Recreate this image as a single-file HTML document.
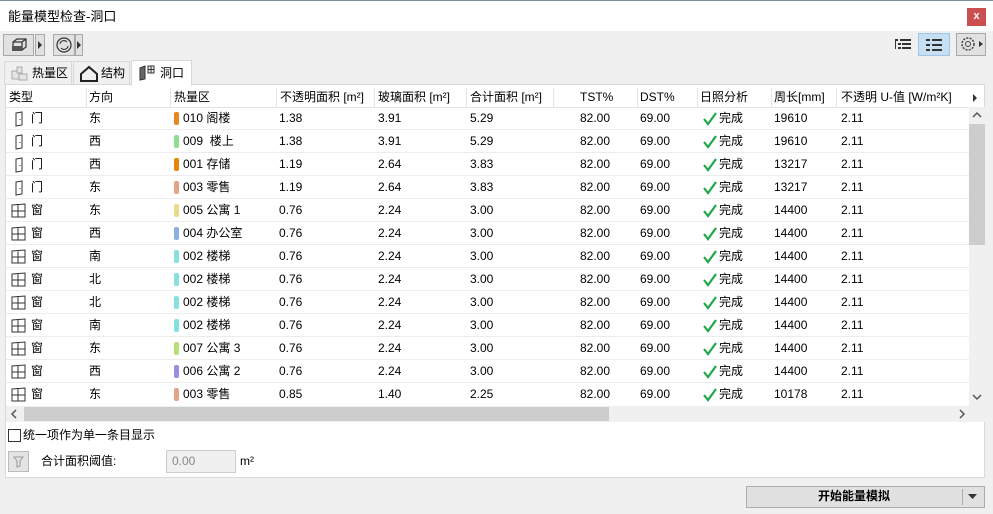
<!DOCTYPE html>
<html><head><meta charset="utf-8"><style>
*{box-sizing:border-box;margin:0;padding:0}
body{width:993px;height:514px;background:#f0f0f0;font-family:"Liberation Sans","Noto Sans CJK SC",sans-serif;font-size:12px;line-height:15px;color:#000;position:relative;overflow:hidden}
.abs{position:absolute}
.title{left:0;top:0;width:993px;height:31px;background:#fff;border-top:1px solid #7f8fa0}
.title span{position:absolute;left:8px;top:8px;font-size:13px}
.close{right:7px;top:7px;width:19px;height:18px;background:#c9504f;color:#fff;font-size:11px;text-align:center;line-height:17px;font-weight:bold}
.tb{border:1px solid #a8a8a8;background:#e1e1e1}
.tab{top:61px;height:24px;border:1px solid #d8d8d8;border-bottom:none;background:#f0f0f0;font-size:12px}
.tab span{top:4px}
.panel{left:5px;top:84px;width:980px;height:394px;background:#fff;border:1px solid #dadada}
.row{position:absolute;left:6px;width:963px;height:23px;border-bottom:1px solid #ececec}
.c{position:absolute;top:4px;white-space:nowrap;line-height:15px}
.hd{position:absolute;white-space:nowrap;line-height:15px}
.vl{position:absolute;top:88px;width:1px;height:19px;background:#e4e4e4}
.zc{position:absolute;top:5px;width:5px;height:13px;border-radius:2px}
.chk{position:absolute;left:697px;top:5px}
</style></head><body>
<div class="abs title"><span>能量模型检查-洞口</span><div class="abs close">x</div></div>

<div class="abs tb" style="left:3px;top:34px;width:31px;height:22px"><svg width="29" height="20"><g fill="none" stroke="#333" stroke-width="1.2"><rect x="9" y="7" width="9" height="8"/><path d="M9 7l4-3h9v8l-4 3M18 7l4-3"/></g><rect x="8" y="11" width="10" height="5" fill="#555"/></svg></div>
<div class="abs tb" style="left:35px;top:34px;width:10px;height:22px"><svg width="8" height="20"><path d="M2 6l4 4-4 4z" fill="#333"/></svg></div>
<div class="abs tb" style="left:53px;top:34px;width:22px;height:22px"><svg width="20" height="20"><circle cx="10" cy="10" r="7" fill="none" stroke="#333" stroke-width="1.2"/><path d="M6 9a4 4 0 0 1 7-2M14 11a4 4 0 0 1-7 2" fill="none" stroke="#333"/></svg></div>
<div class="abs tb" style="left:75px;top:34px;width:8px;height:22px"><svg width="6" height="20"><path d="M1 6l4 4-4 4z" fill="#333"/></svg></div>

<svg class="abs" style="left:894px;top:37px" width="18" height="16"><g fill="#333"><rect x="1" y="2" width="3" height="2"/><rect x="6" y="2" width="11" height="2"/><rect x="4" y="6" width="3" height="2"/><rect x="8" y="6" width="9" height="2"/><rect x="4" y="10" width="3" height="2"/><rect x="8" y="10" width="9" height="2"/><rect x="1" y="4" width="1" height="8"/></g></svg>
<div class="abs" style="left:918px;top:33px;width:32px;height:23px;background:#c6dff3;border:1px solid #9fc5e8"><svg width="30" height="21"><g fill="#333"><rect x="7" y="5" width="4" height="2"/><rect x="13" y="5" width="10" height="2"/><rect x="7" y="10" width="4" height="2"/><rect x="13" y="10" width="10" height="2"/><rect x="7" y="15" width="4" height="2"/><rect x="13" y="15" width="10" height="2"/></g></svg></div>
<div class="abs tb" style="left:956px;top:33px;width:30px;height:23px"><svg width="28" height="21"><circle cx="11" cy="10" r="6" fill="none" stroke="#444" stroke-width="1.5" stroke-dasharray="2 1.3"/><circle cx="11" cy="10" r="2.5" fill="none" stroke="#444"/><path d="M22 7l4 3-4 3z" fill="#333"/></svg></div>

<div class="abs tab" style="left:4px;width:68px"><svg style="position:absolute;left:6px;top:3px" width="18" height="17"><g fill="#e4e4e4" stroke="#aaa"><rect x="1" y="6" width="7" height="8"/><rect x="6" y="2" width="5" height="6"/><rect x="8" y="9" width="8" height="6"/></g></svg><span style="position:absolute;left:27px">热量区</span></div>
<div class="abs tab" style="left:73px;width:57px"><svg style="position:absolute;left:6px;top:3px" width="18" height="17"><path d="M1 9L9 2l8 7v7H1z" fill="none" stroke="#222" stroke-width="2"/></svg><span style="position:absolute;left:27px">结构</span></div>
<div class="abs" style="left:131px;top:60px;width:61px;height:26px;background:#fff;border:1px solid #d8d8d8;border-bottom:none;z-index:2"><svg style="position:absolute;left:6px;top:4px" width="18" height="16"><path d="M2 3l5-2v13l-5 1z" fill="#666" stroke="#333"/><rect x="10" y="1" width="6" height="7" fill="#eee" stroke="#333"/><path d="M13 1v7M10 4.5h6" stroke="#333"/></svg><span style="position:absolute;left:28px;top:5px">洞口</span></div>

<div class="abs panel"></div>
<div class="abs" style="left:6px;top:85px;width:978px;height:22px;background:#fff"></div>
<span class="hd" style="left:9px;top:90px">类型</span>
<span class="hd" style="left:89px;top:90px">方向</span>
<span class="hd" style="left:174px;top:90px">热量区</span>
<span class="hd" style="left:280px;top:90px">不透明面积 [m²]</span>
<span class="hd" style="left:378px;top:90px">玻璃面积 [m²]</span>
<span class="hd" style="left:470px;top:90px">合计面积 [m²]</span>
<span class="hd" style="left:580px;top:90px">TST%</span>
<span class="hd" style="left:640px;top:90px">DST%</span>
<span class="hd" style="left:700px;top:90px">日照分析</span>
<span class="hd" style="left:774px;top:90px">周长[mm]</span>
<span class="hd" style="left:841px;top:90px">不透明 U-值 [W/m²K]</span>
<svg class="abs" style="left:972px;top:93px" width="6" height="10"><path d="M1 1l4 4-4 4z" fill="#333"/></svg>
<div class="vl" style="left:86px"></div><div class="vl" style="left:170px"></div><div class="vl" style="left:276px"></div><div class="vl" style="left:374px"></div><div class="vl" style="left:466px"></div><div class="vl" style="left:553px"></div><div class="vl" style="left:637px"></div><div class="vl" style="left:697px"></div><div class="vl" style="left:771px"></div><div class="vl" style="left:836px"></div>
<div class="abs" style="left:6px;top:107px;width:963px;height:1px;background:#e4e4e4"></div>

<svg width="0" height="0" style="position:absolute"><defs>
<g id="door"><path d="M2 2l6-1v13l-6 1z" fill="none" stroke="#333"/><path d="M6 8v1" stroke="#333"/></g>
<g id="win"><path d="M1 2l13-1v13l-13 0z M1 8h13 M7 1v13" fill="none" stroke="#333"/></g>
<g id="ck"><path d="M1 7l4 5 8-11" fill="none" stroke="#1fa84a" stroke-width="2.2"/></g>
</defs></svg>

<div class="row" style="top:107px"><svg class="abs" style="left:8px;top:4px" width="10" height="16"><use href="#door"/></svg><span class="c" style="left:25px">门</span><span class="c" style="left:83px">东</span><span class="zc" style="left:168px;background:#e8871e"></span><span class="c" style="left:177px">010 阁楼</span><span class="c" style="left:273px">1.38</span><span class="c" style="left:372px">3.91</span><span class="c" style="left:464px">5.29</span><span class="c" style="left:574px">82.00</span><span class="c" style="left:634px">69.00</span><svg class="chk" width="14" height="14"><use href="#ck"/></svg><span class="c" style="left:713px">完成</span><span class="c" style="left:768px">19610</span><span class="c" style="left:835px">2.11</span></div>
<div class="row" style="top:130px"><svg class="abs" style="left:8px;top:4px" width="10" height="16"><use href="#door"/></svg><span class="c" style="left:25px">门</span><span class="c" style="left:83px">西</span><span class="zc" style="left:168px;background:#8ede8e"></span><span class="c" style="left:177px">009 &nbsp;楼上</span><span class="c" style="left:273px">1.38</span><span class="c" style="left:372px">3.91</span><span class="c" style="left:464px">5.29</span><span class="c" style="left:574px">82.00</span><span class="c" style="left:634px">69.00</span><svg class="chk" width="14" height="14"><use href="#ck"/></svg><span class="c" style="left:713px">完成</span><span class="c" style="left:768px">19610</span><span class="c" style="left:835px">2.11</span></div>
<div class="row" style="top:153px"><svg class="abs" style="left:8px;top:4px" width="10" height="16"><use href="#door"/></svg><span class="c" style="left:25px">门</span><span class="c" style="left:83px">西</span><span class="zc" style="left:168px;background:#e8860a"></span><span class="c" style="left:177px">001 存储</span><span class="c" style="left:273px">1.19</span><span class="c" style="left:372px">2.64</span><span class="c" style="left:464px">3.83</span><span class="c" style="left:574px">82.00</span><span class="c" style="left:634px">69.00</span><svg class="chk" width="14" height="14"><use href="#ck"/></svg><span class="c" style="left:713px">完成</span><span class="c" style="left:768px">13217</span><span class="c" style="left:835px">2.11</span></div>
<div class="row" style="top:176px"><svg class="abs" style="left:8px;top:4px" width="10" height="16"><use href="#door"/></svg><span class="c" style="left:25px">门</span><span class="c" style="left:83px">东</span><span class="zc" style="left:168px;background:#e4a487"></span><span class="c" style="left:177px">003 零售</span><span class="c" style="left:273px">1.19</span><span class="c" style="left:372px">2.64</span><span class="c" style="left:464px">3.83</span><span class="c" style="left:574px">82.00</span><span class="c" style="left:634px">69.00</span><svg class="chk" width="14" height="14"><use href="#ck"/></svg><span class="c" style="left:713px">完成</span><span class="c" style="left:768px">13217</span><span class="c" style="left:835px">2.11</span></div>
<div class="row" style="top:199px"><svg class="abs" style="left:5px;top:4px" width="16" height="15"><use href="#win"/></svg><span class="c" style="left:25px">窗</span><span class="c" style="left:83px">东</span><span class="zc" style="left:168px;background:#e8dc8a"></span><span class="c" style="left:177px">005 公寓 1</span><span class="c" style="left:273px">0.76</span><span class="c" style="left:372px">2.24</span><span class="c" style="left:464px">3.00</span><span class="c" style="left:574px">82.00</span><span class="c" style="left:634px">69.00</span><svg class="chk" width="14" height="14"><use href="#ck"/></svg><span class="c" style="left:713px">完成</span><span class="c" style="left:768px">14400</span><span class="c" style="left:835px">2.11</span></div>
<div class="row" style="top:222px"><svg class="abs" style="left:5px;top:4px" width="16" height="15"><use href="#win"/></svg><span class="c" style="left:25px">窗</span><span class="c" style="left:83px">西</span><span class="zc" style="left:168px;background:#8eaee6"></span><span class="c" style="left:177px">004 办公室</span><span class="c" style="left:273px">0.76</span><span class="c" style="left:372px">2.24</span><span class="c" style="left:464px">3.00</span><span class="c" style="left:574px">82.00</span><span class="c" style="left:634px">69.00</span><svg class="chk" width="14" height="14"><use href="#ck"/></svg><span class="c" style="left:713px">完成</span><span class="c" style="left:768px">14400</span><span class="c" style="left:835px">2.11</span></div>
<div class="row" style="top:245px"><svg class="abs" style="left:5px;top:4px" width="16" height="15"><use href="#win"/></svg><span class="c" style="left:25px">窗</span><span class="c" style="left:83px">南</span><span class="zc" style="left:168px;background:#86e0e0"></span><span class="c" style="left:177px">002 楼梯</span><span class="c" style="left:273px">0.76</span><span class="c" style="left:372px">2.24</span><span class="c" style="left:464px">3.00</span><span class="c" style="left:574px">82.00</span><span class="c" style="left:634px">69.00</span><svg class="chk" width="14" height="14"><use href="#ck"/></svg><span class="c" style="left:713px">完成</span><span class="c" style="left:768px">14400</span><span class="c" style="left:835px">2.11</span></div>
<div class="row" style="top:268px"><svg class="abs" style="left:5px;top:4px" width="16" height="15"><use href="#win"/></svg><span class="c" style="left:25px">窗</span><span class="c" style="left:83px">北</span><span class="zc" style="left:168px;background:#86e0e0"></span><span class="c" style="left:177px">002 楼梯</span><span class="c" style="left:273px">0.76</span><span class="c" style="left:372px">2.24</span><span class="c" style="left:464px">3.00</span><span class="c" style="left:574px">82.00</span><span class="c" style="left:634px">69.00</span><svg class="chk" width="14" height="14"><use href="#ck"/></svg><span class="c" style="left:713px">完成</span><span class="c" style="left:768px">14400</span><span class="c" style="left:835px">2.11</span></div>
<div class="row" style="top:291px"><svg class="abs" style="left:5px;top:4px" width="16" height="15"><use href="#win"/></svg><span class="c" style="left:25px">窗</span><span class="c" style="left:83px">北</span><span class="zc" style="left:168px;background:#86e0e0"></span><span class="c" style="left:177px">002 楼梯</span><span class="c" style="left:273px">0.76</span><span class="c" style="left:372px">2.24</span><span class="c" style="left:464px">3.00</span><span class="c" style="left:574px">82.00</span><span class="c" style="left:634px">69.00</span><svg class="chk" width="14" height="14"><use href="#ck"/></svg><span class="c" style="left:713px">完成</span><span class="c" style="left:768px">14400</span><span class="c" style="left:835px">2.11</span></div>
<div class="row" style="top:314px"><svg class="abs" style="left:5px;top:4px" width="16" height="15"><use href="#win"/></svg><span class="c" style="left:25px">窗</span><span class="c" style="left:83px">南</span><span class="zc" style="left:168px;background:#86e0e0"></span><span class="c" style="left:177px">002 楼梯</span><span class="c" style="left:273px">0.76</span><span class="c" style="left:372px">2.24</span><span class="c" style="left:464px">3.00</span><span class="c" style="left:574px">82.00</span><span class="c" style="left:634px">69.00</span><svg class="chk" width="14" height="14"><use href="#ck"/></svg><span class="c" style="left:713px">完成</span><span class="c" style="left:768px">14400</span><span class="c" style="left:835px">2.11</span></div>
<div class="row" style="top:337px"><svg class="abs" style="left:5px;top:4px" width="16" height="15"><use href="#win"/></svg><span class="c" style="left:25px">窗</span><span class="c" style="left:83px">东</span><span class="zc" style="left:168px;background:#b6e07a"></span><span class="c" style="left:177px">007 公寓 3</span><span class="c" style="left:273px">0.76</span><span class="c" style="left:372px">2.24</span><span class="c" style="left:464px">3.00</span><span class="c" style="left:574px">82.00</span><span class="c" style="left:634px">69.00</span><svg class="chk" width="14" height="14"><use href="#ck"/></svg><span class="c" style="left:713px">完成</span><span class="c" style="left:768px">14400</span><span class="c" style="left:835px">2.11</span></div>
<div class="row" style="top:360px"><svg class="abs" style="left:5px;top:4px" width="16" height="15"><use href="#win"/></svg><span class="c" style="left:25px">窗</span><span class="c" style="left:83px">西</span><span class="zc" style="left:168px;background:#9c8ce4"></span><span class="c" style="left:177px">006 公寓 2</span><span class="c" style="left:273px">0.76</span><span class="c" style="left:372px">2.24</span><span class="c" style="left:464px">3.00</span><span class="c" style="left:574px">82.00</span><span class="c" style="left:634px">69.00</span><svg class="chk" width="14" height="14"><use href="#ck"/></svg><span class="c" style="left:713px">完成</span><span class="c" style="left:768px">14400</span><span class="c" style="left:835px">2.11</span></div>
<div class="row" style="top:383px;border-bottom:none"><svg class="abs" style="left:5px;top:4px" width="16" height="15"><use href="#win"/></svg><span class="c" style="left:25px">窗</span><span class="c" style="left:83px">东</span><span class="zc" style="left:168px;background:#e4a487"></span><span class="c" style="left:177px">003 零售</span><span class="c" style="left:273px">0.85</span><span class="c" style="left:372px">1.40</span><span class="c" style="left:464px">2.25</span><span class="c" style="left:574px">82.00</span><span class="c" style="left:634px">69.00</span><svg class="chk" width="14" height="14"><use href="#ck"/></svg><span class="c" style="left:713px">完成</span><span class="c" style="left:768px">10178</span><span class="c" style="left:835px">2.11</span></div>

<div class="abs" style="left:969px;top:107px;width:16px;height:300px;background:#f0f0f0"></div>
<div class="abs" style="left:969px;top:124px;width:16px;height:121px;background:#cdcdcd"></div>
<svg class="abs" style="left:972px;top:111px" width="10" height="8"><path d="M1 6l4-4 4 4" fill="none" stroke="#555" stroke-width="1.5"/></svg>
<svg class="abs" style="left:972px;top:393px" width="10" height="8"><path d="M1 2l4 4 4-4" fill="none" stroke="#555" stroke-width="1.5"/></svg>
<div class="abs" style="left:6px;top:406px;width:963px;height:16px;background:#f0f0f0"></div>
<div class="abs" style="left:24px;top:407px;width:585px;height:14px;background:#cdcdcd"></div>
<svg class="abs" style="left:10px;top:409px" width="8" height="10"><path d="M6 1L2 5l4 4" fill="none" stroke="#555" stroke-width="1.5"/></svg>
<svg class="abs" style="left:958px;top:409px" width="8" height="10"><path d="M2 1l4 4-4 4" fill="none" stroke="#555" stroke-width="1.5"/></svg>
<div class="abs" style="left:969px;top:406px;width:16px;height:16px;background:#f0f0f0"></div>

<div class="abs" style="left:8px;top:429px;width:13px;height:13px;border:1px solid #333;background:#fff"></div>
<span class="abs" style="left:23px;top:428px">统一项作为单一条目显示</span>
<div class="abs" style="left:8px;top:451px;width:21px;height:21px;border:1px solid #bbb;background:#e4e4e4"><svg width="19" height="19"><path d="M5 5h9l-3 4v5l-3 1V9z" fill="none" stroke="#999"/></svg></div>
<span class="abs" style="left:41px;top:454px">合计面积阈值:</span>
<div class="abs" style="left:166px;top:450px;width:70px;height:23px;border:1px solid #ccc;background:#f0f0f0;color:#888;padding:3px 0 0 5px">0.00</div>
<span class="abs" style="left:240px;top:454px">m²</span>

<div class="abs" style="left:746px;top:486px;width:239px;height:22px;border:1px solid #adadad;background:#e1e1e1"></div>
<span class="abs" style="left:818px;top:489px;font-weight:bold">开始能量模拟</span>
<div class="abs" style="left:962px;top:489px;width:1px;height:16px;background:#adadad"></div>
<svg class="abs" style="left:968px;top:494px" width="10" height="6"><path d="M0 0h9l-4.5 5z" fill="#333"/></svg>
</body></html>
